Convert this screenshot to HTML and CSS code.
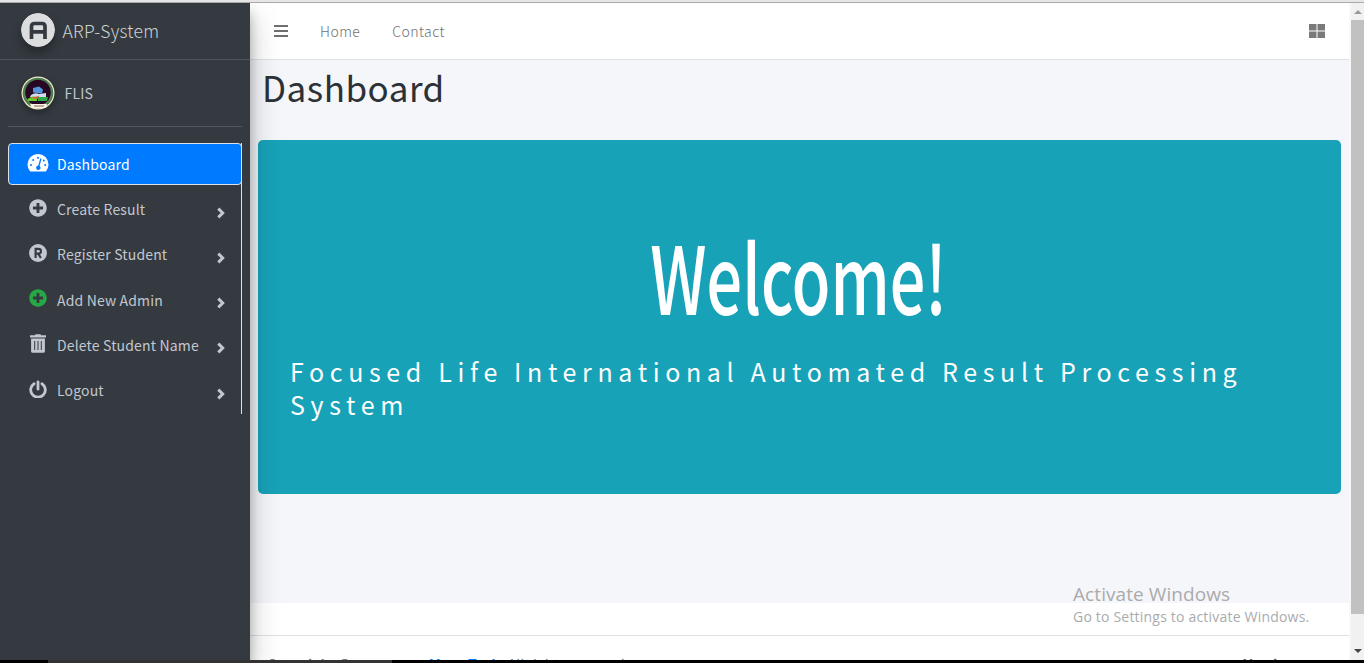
FILE: index.html
```html
<!DOCTYPE html>
<html lang="en">
<head>
<meta charset="utf-8">
<title>ARP-System | Dashboard</title>
<link rel="stylesheet" href="styles.css">
</head>
<body>
<svg class="defs" width="0" height="0">
  <symbol id="plus" viewBox="0 0 512 512"><path d="M256 8C119 8 8 119 8 256s111 248 248 248 248-111 248-248S393 8 256 8zm144 276c0 6.600-5.400 12-12 12h-92v92c0 6.600-5.400 12-12 12h-56c-6.600 0-12-5.400-12-12v-92h-92c-6.600 0-12-5.400-12-12v-56c0-6.600 5.400-12 12-12h92v-92c0-6.600 5.400-12 12-12h56c6.600 0 12 5.400 12 12v92h92c6.600 0 12 5.400 12 12z"/></symbol>
  <symbol id="chevron" viewBox="0 0 8 12"><path d="M1.300 1.600 5.700 6 1.300 10.400" fill="none" stroke="currentColor" stroke-width="3"/></symbol>
</svg>
<div class="window-edge"></div>
<div class="app">
  <aside class="sidebar">
    <a class="brand">
      <svg class="brand-logo" viewBox="0 0 34 34"><circle cx="17" cy="17" r="17" fill="#dcdddf"/><path d="M10.500 26V13.500q0-3 3-3h7.500q3 0 3 3V26M10.500 18.800H24" fill="none" stroke="#343a40" stroke-width="3.700"/></svg>
      <span class="brand-text">ARP-System</span>
    </a>
    <div class="user">
      <svg class="avatar" viewBox="0 0 34 34"><circle cx="17" cy="17" r="16.500" fill="#f2edc9"/><circle cx="17" cy="17" r="15.300" fill="#4c7c50"/><circle cx="17" cy="17" r="13.200" fill="#6f8a68"/><circle cx="17" cy="16.500" r="12.800" fill="#260822"/><path d="M12 12l6-1.500 4 3-1 4-9-1z" fill="#5295dc"/><path d="M10 19q4-3 8-1l7-1v4H9z" fill="#cfdcf0"/><path d="M6 24q4-5 10-3v4H7z" fill="#64ce28"/><path d="M9 22l9-2v3z" fill="#e65238"/><path d="M17 21h10l-1 4h-9z" fill="#2fa849"/><path d="M9 28h17l-1 4H11z" fill="#f7f3e6"/><path d="M13 30h10" stroke="#8a6660"/></svg>
      <span>FLIS</span>
    </div>
    <nav class="menu">
      <a class="item active"><svg class="icon wide" viewBox="0 0 22 18"><path d="M2.800 17Q.5 14 .5 10.500a10.500 10.500 0 0 1 21 0q0 3.500-2.300 6.500-.4.500-1 .5H3.800q-.6 0-1-.5z" fill="#fff"/><g fill="#007bff"><circle cx="4" cy="11" r="1"/><circle cx="6.200" cy="6" r="1"/><circle cx="11" cy="3.700" r="1"/><circle cx="16.800" cy="6.500" r="1"/><circle cx="18.200" cy="11" r="1"/><path d="M13.300 4.300l1.200.4-1.900 7.300a2.200 2.200 0 1 1-1.300-.4z"/></g></svg><span>Dashboard</span></a>
      <a class="item"><svg class="icon"><use href="#plus"/></svg><span>Create Result</span><svg class="arrow"><use href="#chevron"/></svg></a>
      <a class="item"><svg class="icon" viewBox="0 0 18 18"><circle cx="9" cy="9" r="8.900" fill="currentColor"/><path d="M6.600 14V4.900h2.800q2.600 0 2.600 2.400 0 2.300-2.600 2.300H6.600M9.200 9.600l2.700 4.400" fill="none" stroke="#343a40" stroke-width="2.100"/></svg><span>Register Student</span><svg class="arrow"><use href="#chevron"/></svg></a>
      <a class="item"><svg class="icon green"><use href="#plus"/></svg><span>Add New Admin</span><svg class="arrow"><use href="#chevron"/></svg></a>
      <a class="item"><svg class="icon trash" viewBox="0 0 17 19"><path d="M.5 1.200h5L6 .3h5l.5.900h5v2.300H.5z" fill="currentColor"/><path d="M1.600 4.600h13.800v12.600q0 1.500-1.500 1.500H3.100q-1.500 0-1.500-1.500z" fill="currentColor"/><path d="M5.200 7v9M8.500 7v9M11.800 7v9" stroke="#343a40" stroke-width="1"/></svg><span>Delete Student Name</span><svg class="arrow"><use href="#chevron"/></svg></a>
      <a class="item"><svg class="icon" viewBox="0 0 18 18"><path d="M5.100 3.700A7.300 7.300 0 1 0 12.900 3.700M9 1.800v7.400" fill="none" stroke="currentColor" stroke-width="2.800" stroke-linecap="round"/></svg><span>Logout</span><svg class="arrow"><use href="#chevron"/></svg></a>
    </nav>
  </aside>
  <main class="main">
    <header class="topbar">
      <svg class="bars" viewBox="0 0 14 12"><path d="M0 1h14M0 6h14M0 11h14" stroke="currentColor" stroke-width="2"/></svg>
      <a class="home">Home</a><a class="contact">Contact</a>
      <svg class="grid" viewBox="0 0 16 14"><path d="M0 0h7.500v6.500H0zM8.500 0H16v6.500H8.500zM0 7.500h7.500V14H0zM8.500 7.500H16V14H8.500z" fill="#7a7a7a"/></svg>
    </header>
    <section class="content">
      <h1>Dashboard</h1>
      <div class="jumbo">
        <div class="welcome"><span>Welcome!</span></div>
        <p>Focused Life International Automated Result Processing<br>System</p>
      </div>
    </section>
    <footer class="footer"><div><b>Copyright ©</b> <b class="link">Mega Tech.</b> <span>All rights reserved.</span></div><b class="version">Version</b></footer>
  </main>
  <div class="scrollbar"><i class="up"></i><div class="thumb"></div><i class="down"></i></div>
</div>
<div class="taskbar"><i></i></div>
<div class="watermark"><div class="wm-title">Activate Windows</div><div class="wm-sub">Go to Settings to activate Windows.</div></div>
</body>
</html>
```
FILE: styles.css
```css
* { box-sizing: border-box; }
body { margin: 0; width: 1364px; height: 663px; overflow: hidden; display: flex; flex-direction: column; background: #fff; font-family: "Noto Sans CJK SC", "Noto Sans", sans-serif; font-size: 14px; color: #212529; }
svg { display: block; flex: none; }
.defs { position: absolute; }
.window-edge { height: 3px; flex: none; background: #e6e6e6; border-bottom: 1px solid #aaa; }
.app { display: flex; height: 657px; flex: none; }
.sidebar { width: 250px; flex: none; background: #343a40; color: #c2c7d0; position: relative; z-index: 1; box-shadow: 0 14px 28px rgba(0,0,0,.25), 0 10px 10px rgba(0,0,0,.22); clip-path: inset(0 -60px 0 0); }
.brand { display: flex; height: 57px; border-bottom: 1px solid #4b545c; padding: 10px 0 0 21px; }
.brand-logo { width: 34px; height: 34px; border-radius: 50%; box-shadow: 0 6px 10px rgba(0,0,0,.3); }
.brand-text { font-size: 17.500px; font-weight: 300; line-height: 36px; margin-left: 7.500px; letter-spacing: .3px; color: #d0d2d3; }
.user { display: flex; margin: 0 8px; height: 67px; border-bottom: 1px solid #4f5962; padding: 16px 0 0 12.500px; }
.avatar { width: 34px; height: 34px; border-radius: 50%; box-shadow: 0 3px 6px rgba(0,0,0,.3); }
.user span { margin-left: 10px; line-height: 34px; letter-spacing: .16px; }
.menu { margin: 16px 8px 0; height: 271px; border-right: 1px solid #dee2e6; display: flex; flex-direction: column; gap: 3.220px; }
.item { height: 42px; display: flex; align-items: center; padding: 0 16px 0 20px; flex: none; white-space: nowrap; letter-spacing: .16px; }
.active { background: #007bff; color: #fff; border: 1px solid #dee2e6; border-radius: 4px; padding-left: 18px; margin-right: -1px; }
.icon { width: 18px; height: 18px; margin: -3px 10px 0 1px; fill: currentColor; }
.wide { width: 22px; height: 18px; margin: -3px 8px 0 0; }
.trash { width: 18px; height: 19px; margin-top: -2px; }
.green { color: #28a745; }
.arrow { width: 8px; height: 12px; margin: 7px 0 0 auto; }
.main { width: 1099px; flex: none; display: flex; flex-direction: column; }
.topbar { height: 57px; flex: none; border-bottom: 1px solid #dee2e6; display: flex; align-items: center; padding: 0 24px; color: #6f6f6f; font-weight: 300; letter-spacing: .45px; }
.bars { width: 14px; height: 12px; }
.home { margin-left: 32px; }
.contact { margin-left: 32px; }
.grid { width: 16px; height: 14px; margin-left: auto; }
.content { background: #f4f6f9; height: 543px; flex: none; padding: 0 8px; }
h1 { font-size: 35px; font-weight: 400; line-height: 50px; height: 80px; margin: 0; padding: 2px 0 0 4px; letter-spacing: .5px; color: #2b3136; }
.jumbo { height: 354px; background: #17a2b8; border-radius: 5px; color: #fff; padding: 80px 32px 0; }
.welcome { height: 120px; line-height: 108px; text-align: center; font-weight: 500; font-size: 94px; margin-left: -2px; }
.welcome span { display: inline-block; transform: scaleX(.669); }
p { margin: 15px 0 0; font-size: 25px; line-height: 33px; letter-spacing: 5.630px; white-space: nowrap; }
.footer { flex: 1; overflow: hidden; margin-top: 32px; border-top: 1px solid #dee2e6; color: #777d83; padding: 18px 16px 0 17px; display: flex; justify-content: space-between; white-space: nowrap; }
.link { color: #007bff; margin-left: 75px; }
.version { color: #555; margin-right: 38px; }
.scrollbar { width: 15px; flex: none; background: #f1f1f1; border-left: 2px solid #f8f8f8; display: flex; flex-direction: column; align-items: center; }
.up, .down { border: 4px solid transparent; width: 0; height: 0; }
.up { border-top: 0; border-bottom-color: #999; margin: 7px 0 6px; }
.thumb { width: 13px; height: 594px; background: #c1c1c1; flex: none; }
.down { border-bottom: 0; border-top-color: #444; margin-top: 35px; }
.taskbar { height: 3px; background: #000; flex: none; }
.taskbar i { display: block; width: 344px; height: 3px; margin-left: 48px; background: #333; }
.watermark { position: absolute; left: 1073px; top: 581px; font-family: "Open Sans"; color: #aaabad; white-space: nowrap; z-index: 2; }
.wm-title { font-size: 19px; line-height: 26px; letter-spacing: .08px; }
.wm-sub { font-size: 14px; line-height: 20px; letter-spacing: .2px; }
```
